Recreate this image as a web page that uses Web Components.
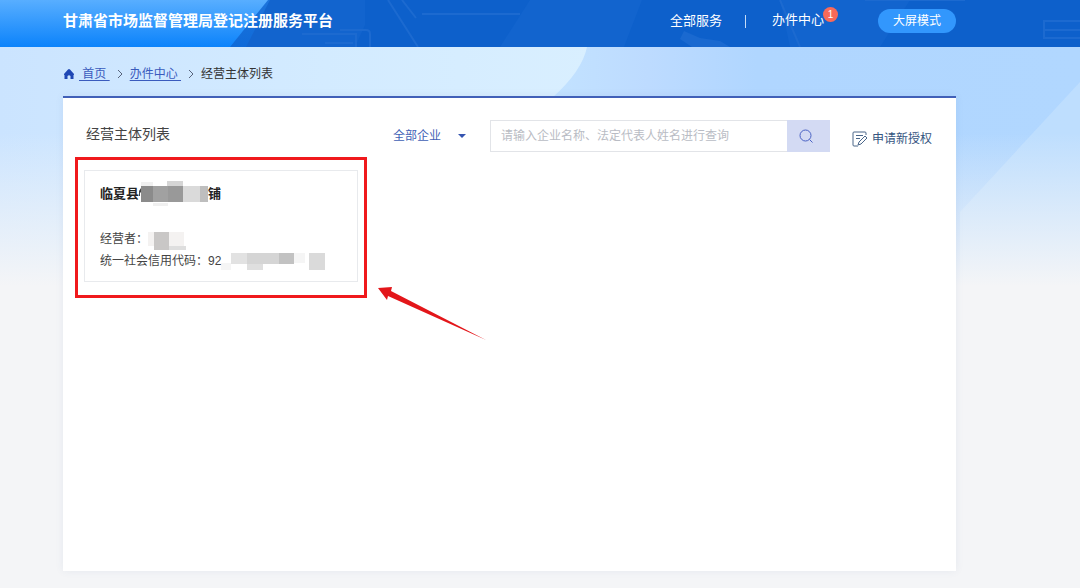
<!DOCTYPE html>
<html lang="zh-CN">
<head>
<meta charset="utf-8">
<title>甘肃省市场监督管理局登记注册服务平台</title>
<style>
html{height:100%}
body{margin:0;min-height:100%;background:#f4f5f7;color:#333;font:12px/16px "Liberation Sans","Noto Sans CJK SC",sans-serif;display:grid}
</style>
</head>
<body>
<app-page>
  <app-header slot="header" heading="甘肃省市场监督管理局登记注册服务平台"></app-header>
  <app-crumbs></app-crumbs>
  <list-panel>
    <list-toolbar slot="toolbar" heading="经营主体列表"></list-toolbar>
    <marked-area>
      <entity-card></entity-card>
      <red-arrow slot="pointer"></red-arrow>
    </marked-area>
  </list-panel>
</app-page>
<script>
const define = (name, html) => customElements.define(name, class extends HTMLElement {
  constructor() {
    super();
    this.attachShadow({ mode: 'open' }).innerHTML = html;
    const h = this.shadowRoot.querySelector('[data-heading]');
    if (h) h.textContent = this.getAttribute('heading');
  }
});

define('app-page', `
<style>
:host{display:grid;grid-template-rows:auto 1fr}
.body{display:grid;min-width:0}
.sky{grid-area:1/1;width:100%;height:260px;display:block}
main{grid-area:1/1;z-index:1;display:flex;flex-direction:column;padding:0 124px 17px 63px}
</style>
<slot name="header"></slot>
<div class="body">
  <svg class="sky" viewBox="0 0 1080 260" preserveAspectRatio="none" aria-hidden="true">
    <defs>
      <linearGradient id="l"><stop offset="0" stop-color="#cbe4ff"/><stop offset=".3" stop-color="#d3ebff"/><stop offset=".55" stop-color="#d9efff"/></linearGradient>
      <linearGradient id="r"><stop offset="0" stop-color="#c3e3ff"/><stop offset=".2" stop-color="#bddbff"/><stop offset=".4" stop-color="#b0d6ff"/><stop offset="1" stop-color="#b1d7ff"/></linearGradient>
      <linearGradient id="f" x1="0" y1="0" x2="0" y2="1"><stop offset=".33" stop-color="#f4f5f7" stop-opacity="0"/><stop offset=".65" stop-color="#f4f5f7" stop-opacity=".55"/><stop offset=".92" stop-color="#f4f5f7"/></linearGradient>
    </defs>
    <path fill="url(#l)" d="M0 0h1080v260H0z"/>
    <path fill="url(#r)" d="M587 0Q582 24 553 50L540 260H1080V0z"/>
    <path fill="#c6e2fd" opacity=".6" d="M1080 35L960 165V260H1080z"/>
    <path fill="url(#f)" d="M0 0h1080v260H0z"/>
  </svg>
  <main><slot></slot></main>
</div>`);

define('app-header', `
<style>
:host{display:grid;height:47px;color:#fff;background:#0d60cb}
.art{grid-area:1/1;width:100%;height:47px;display:block}
header{grid-area:1/1;z-index:1;display:flex;align-items:center;padding:0 124px 5px 63px}
h1{margin:0 auto 0 0;font-size:15px;line-height:20px;font-weight:700;white-space:nowrap}
nav{display:flex;align-items:center;font-size:13px;line-height:18px}
a{color:inherit;text-decoration:none;white-space:nowrap}
i{width:1px;height:13px;background:#c5dcf7;margin:0 26px 0 23px}
.task{position:relative;padding-bottom:2px}
.badge{position:absolute;left:51px;top:-4px;width:15px;height:15px;border-radius:8px;background:#f96a59;font-size:10px;line-height:15px;text-align:center}
button{margin:0 0 0 54px;width:78px;height:24px;border:0;border-radius:12px;padding:0;background:#3297fd;color:#fff;font:inherit;font-size:12px}
</style>
<svg class="art" viewBox="0 0 1080 47" preserveAspectRatio="none" aria-hidden="true">
  <defs>
    <linearGradient id="g" x1="0" y1="0" x2="0" y2="1"><stop offset="0" stop-color="#58aeff"/><stop offset="1" stop-color="#0c83fb"/></linearGradient>
    <linearGradient id="h" x1="0" y1="0" x2="0" y2="1"><stop offset="0" stop-color="#1d74dc"/><stop offset="1" stop-color="#0f6ad8"/></linearGradient>
  </defs>
  <path fill="#0d60cb" d="M0 0h1080v47H0z"/>
  <path fill="#1264ce" d="M270 0h95v25l-10 22H245zM530 0h112l-18 47H500zM780 0h130l-30 47h-90z"/>
  <path fill="url(#h)" d="M257 0h13l-24 47h-17z"/>
  <path fill="url(#g)" d="M0 0h268L230 47H0z"/>
  <g fill="none" stroke="#1c6ad0" stroke-width="2">
    <path d="M302 34h54v13M325 43h28M340 30h26q4 0 4 4v13M388 0l30 47M402 0l14 18M422 14h98M780 0l20 47M865 0h100M1080 21h-36v17h36M1045 30h35"/>
  </g>
  <path fill="#1a69d0" d="M684 31l16 7 20 3 10 6h-38l-12-8z"/>
</svg>
<header>
  <h1 data-heading></h1>
  <nav aria-label="主导航">
    <a href="#">全部服务</a><i></i><a class="task" href="#">办件中心<span class="badge">1</span></a>
    <button type="button">大屏模式</button>
  </nav>
</header>`);

define('app-crumbs', `
<style>
:host{display:block;padding:18px 0 13px}
nav{display:flex;align-items:center;height:18px;white-space:pre}
a{color:#3a5bbd;text-decoration:underline;text-underline-offset:2px}
.home{margin-right:4px}
.sep{margin:0 6px}
</style>
<nav aria-label="面包屑">
  <svg class="home" width="12" height="12" viewBox="0 0 12 12" aria-hidden="true"><path fill="#1f47b4" d="M6 1Q6.500 1 7 1.500L11 6Q11.300 7 10.500 7V11H7.500V8Q6 6.500 4.500 8V11H1.500V7Q.7 7 1 6L5 1.500Q5.500 1 6 1z"/></svg>
  <a href="#"> 首页 </a>
  <svg class="sep" width="8" height="10" viewBox="0 0 8 10" aria-hidden="true"><path d="M2 1l4 4-4 4" fill="none" stroke="#58647c"/></svg>
  <a href="#">办件中心 </a>
  <svg class="sep" width="8" height="10" viewBox="0 0 8 10" aria-hidden="true"><path d="M2 1l4 4-4 4" fill="none" stroke="#58647c"/></svg>
  <span aria-current="page">经营主体列表</span>
</nav>`.replace(/>\n\s*</g, '><'));

define('list-panel', `
<style>
:host{display:block;flex:1;background:#fff;border-top:2px solid #4160b8;box-shadow:0 0 8px rgba(60,90,140,.08)}
</style>
<slot name="toolbar"></slot><slot></slot>`);

define('list-toolbar', `
<style>
:host{display:flex;align-items:center;padding:22px 24px 0 23px}
h2{margin:0 auto 4px 0;font-size:14px;line-height:20px;font-weight:400;color:#444}
.kind{display:flex;align-items:center;margin-right:24px}
select{appearance:none;border:0;background:none;padding:0;margin:0;width:65px;height:24px;font:inherit;color:#3f5fb5}
form{display:flex;flex:0 1 340px;height:32px;margin:0}
input{flex:1;min-width:0;box-sizing:border-box;border:1px solid #e2e4e8;border-right:0;border-radius:0;padding:0 10px;font:inherit;color:#333;background:#fff;outline:0}
input::placeholder{color:#b9bcc4;opacity:1}
button{width:43px;border:0;padding:0 4px 0 0;background:#d3daf3;display:grid;place-items:center}
a{display:flex;align-items:center;gap:4px;margin:6px 0 0 22px;color:#35557f;text-decoration:none;white-space:nowrap}
</style>
<h2 data-heading></h2>
<div class="kind">
  <select aria-label="企业类型"><option>全部企业</option></select>
  <svg width="8" height="4" viewBox="0 0 8 4" aria-hidden="true"><path fill="#3554b0" d="M0 0h8L4 4z"/></svg>
</div>
<form role="search">
  <input type="text" aria-label="查询" placeholder="请输入企业名称、法定代表人姓名进行查询">
  <button type="button" aria-label="搜索"><svg width="14" height="14" viewBox="0 0 14 14" fill="none" stroke="#4a62c4"><circle cx="6.500" cy="6.500" r="5.500"/><path d="M10.500 10.500l3 3"/></svg></button>
</form>
<a href="#"><svg width="16" height="16" viewBox="0 0 16 16" fill="none" stroke="#4a6689"><path d="M14 4V2q0-1-1-1H2Q1 1 1 2v12q0 1 1 1h4M4 4.500h7M4 7.500h4M13 5l2 2-6 6-3 1 1-3z"/></svg>申请新授权</a>`);

define('marked-area', `
<style>
:host{display:block;position:relative;box-sizing:border-box;width:292px;margin:5px 0 0 12px;padding:10px 6px 13px 6px;border:3px solid #f0191c}
::slotted([slot=pointer]){position:absolute;left:299px;top:126px}
</style>
<slot></slot><slot name="pointer"></slot>`);

define('red-arrow', `
<style>:host{display:block;width:112px;height:56px}svg{display:block}</style>
<svg width="112" height="56" viewBox="0 0 112 56" aria-hidden="true"><path fill="#e3161a" d="M1 2L15 1 14 5 109 54 11 10 10 14z"/></svg>`);

define('entity-card', `
<style>
:host{display:block;border:1px solid #e8eaed;padding:10px 15px 9px;background:#fff}
h3{display:flex;align-items:center;margin:0 0 21px;font-size:13px;line-height:22px;font-weight:700;color:#222}
dl{margin:0;color:#444;line-height:22px}
dl div{display:flex}
dt,dd{margin:0}
svg{display:block}
</style>
<h3><span>临夏县</span><svg width="69" height="26" viewBox="0 0 69 26" aria-hidden="true">
  <path fill="#444" d="M0 10l2-3v4l-1 1v3H0z"/>
  <path fill="#f0f0f0" d="M2 1h12v5H2zM14 22h15v3H14z"/><path fill="#d5d5d5" d="M28 0h16v6H28z"/>
  <path fill="#8b8b8b" d="M2 5h12v16H2z"/><path fill="#a1a1a1" d="M14 5h15v16H14z"/><path fill="#999" d="M29 5h15v16H29z"/>
  <path fill="#dadada" d="M44 5h17v16H44z"/><path fill="#bebebe" d="M61 5h8v16h-8z"/></svg><span>铺</span></h3>
<dl>
  <div><dt>经营者：</dt><dd><svg width="44" height="22" viewBox="0 0 44 22" aria-hidden="true">
    <path fill="#f4f2f1" d="M0 4h6v14H0zM21 4h15v14H21z"/><path fill="#c9c7c6" d="M6 4h15v18H6z"/><path fill="#dedede" d="M21 18h17v4H21z"/></svg></dd></div>
  <div><dt>统一社会信用代码：</dt><dd>92</dd><dd><svg width="120" height="22" viewBox="0 0 120 22" aria-hidden="true">
    <path fill="#ebebeb" d="M0 13h10v7H0zM73 3h11v10H73z" opacity=".5"/><path fill="#e2e2e2" d="M10 3h16v11H10z"/><path fill="#d5d5d5" d="M26 3h32v11H26z"/><path fill="#dfdfdf" d="M26 14h16v6H26z"/>
    <path fill="#c2c2c2" d="M58 3h15v11H58z"/><path fill="#dadada" d="M88 3h16v17H88z"/></svg></dd></div>
</dl>`);
</script>
</body>
</html>
